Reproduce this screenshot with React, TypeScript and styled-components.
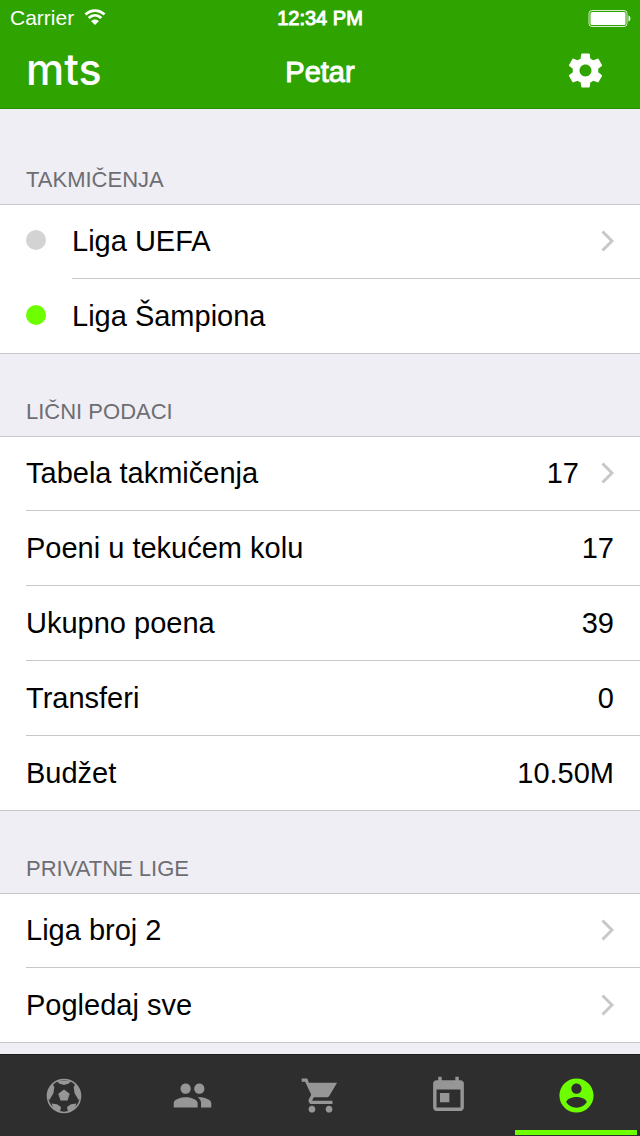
import React from "react";
import styled, { createGlobalStyle } from "styled-components";

const GlobalStyle = createGlobalStyle`
  * { box-sizing: border-box; }
  body {
    margin: 0;
    background: #efeef4;
    color: #000;
    font-family: "Liberation Sans", Arial, sans-serif;
  }
`;

const Screen = styled.div`
  display: flex;
  flex-direction: column;
  height: 100vh;
`;

const Header = styled.header`
  flex: none;
  height: 109px;
  background: #2fa400;
  color: #fff;
  border-bottom: 1px solid #279000;
`;

const ThreeColumns = styled.div`
  display: grid;
  grid-template-columns: 1fr auto 1fr;
  align-items: center;
`;

const StatusBar = styled(ThreeColumns)`
  height: 36px;
  padding: 0 9px;
  font-size: 20px;
`;

const Carrier = styled.div`
  display: flex;
  align-items: center;
  gap: 10px;
  padding-left: 1px;
  font-size: 21px;
`;

const Clock = styled.time`
  -webkit-text-stroke: 1px currentColor;
`;

const Battery = styled.svg`
  justify-self: end;
`;

const NavBar = styled(ThreeColumns)`
  height: 72px;
  padding: 0 26px;
`;

const Logo = styled.a`
  color: inherit;
  text-decoration: none;
  font: 500 43px/60px Inter, sans-serif;
  padding-bottom: 6px;
`;

const Title = styled.h1`
  margin: 0;
  font-size: 29px;
  font-weight: 400;
  -webkit-text-stroke: 1px currentColor;
`;

const IconButton = styled.button`
  justify-self: end;
  display: flex;
  padding: 0 8px 4px 0;
  border: 0;
  background: none;
  color: inherit;
`;

const Content = styled.main`
  flex: 1;
  min-height: 0;
  overflow: hidden;
  padding-top: 13px;
`;

const SectionTitle = styled.h2`
  margin: 0;
  padding: 44px 26px 10px;
  color: #6d6d72;
  font-size: 22px;
  font-weight: 400;
  line-height: 28px;
`;

const List = styled.ul`
  margin: 0;
  padding: 0;
  list-style: none;
  background: #fff;
  box-shadow: inset 0 1px #c8c7cc, inset 0 -1px #c8c7cc;
`;

const Item = styled.li`
  display: flex;
  align-items: center;
  height: 75px;
  padding-left: 26px;
`;

const Dot = styled.span<{ $on?: boolean }>`
  width: 20px;
  height: 20px;
  margin-right: 26px;
  margin-bottom: 4px;
  border-radius: 50%;
  background: ${(p) => (p.$on ? "#6dff00" : "#d3d3d3")};
`;

const Line = styled.a`
  flex: 1;
  align-self: stretch;
  display: flex;
  align-items: center;
  padding-right: 26px;
  color: inherit;
  text-decoration: none;
  font-size: 29px;
  border-bottom: 1px solid #c8c7cc;
`;

const Value = styled.span`
  margin-left: auto;
`;

const Chevron = styled.svg`
  flex: none;
  margin-left: auto;

  ${Value} + & {
    margin-left: 22px;
  }
`;

const TabBar = styled.nav`
  flex: none;
  display: grid;
  grid-template-columns: repeat(5, 1fr);
  height: 82px;
  background: #2e2e2e;
  border-top: 1px solid #1c1f1e;
`;

const Tab = styled.button<{ $active?: boolean }>`
  display: flex;
  align-items: center;
  justify-content: center;
  margin: 0 3px 1px;
  padding: 6px 0 0;
  border: 0;
  border-bottom: 5px solid ${(p) => (p.$active ? "#6dff00" : "transparent")};
  background: none;
  color: ${(p) => (p.$active ? "#6dff00" : "#969696")};
`;

const GEAR =
  "M19.43 12.98c.04-.32.07-.64.07-.98s-.03-.66-.07-.98l2.11-1.65c.19-.15.24-.42.12-.64l-2-3.46c-.12-.22-.39-.3-.61-.22l-2.49 1c-.52-.4-1.08-.73-1.69-.98l-.38-2.65C14.46 2.18 14.25 2 14 2h-4c-.25 0-.46.18-.49.42l-.38 2.65c-.61.25-1.17.59-1.69.98l-2.49-1c-.23-.09-.49 0-.61.22l-2 3.46c-.13.22-.07.49.12.64l2.11 1.65c-.04.32-.07.65-.07.98s.03.66.07.98l-2.11 1.65c-.19.15-.24.42-.12.64l2 3.46c.12.22.39.3.61.22l2.49-1c.52.4 1.08.73 1.69.98l.38 2.65c.03.24.24.42.49.42h4c.25 0 .46-.18.49-.42l.38-2.65c.61-.25 1.17-.59 1.69-.98l2.49 1c.23.09.49 0 .61-.22l2-3.46c.12-.22.07-.49-.12-.64l-2.11-1.65zM12 15.5c-1.93 0-3.5-1.57-3.5-3.5s1.57-3.5 3.5-3.5 3.5 1.57 3.5 3.5-1.57 3.5-3.5 3.5z";
const PEOPLE =
  "M16 11c1.66 0 2.99-1.34 2.99-3S17.66 5 16 5s-3 1.34-3 3 1.34 3 3 3zm-8 0c1.66 0 2.99-1.34 2.99-3S9.66 5 8 5 5 6.34 5 8s1.34 3 3 3zm0 2c-2.33 0-7 1.17-7 3.5V19h14v-2.5c0-2.33-4.67-3.5-7-3.5zm8 0c-.29 0-.62.02-.97.05 1.16.84 1.97 1.97 1.97 3.45V19h6v-2.5c0-2.33-4.67-3.5-7-3.5z";
const CART =
  "M7 18c-1.1 0-1.99.9-1.99 2S5.9 22 7 22s2-.9 2-2-.9-2-2-2zM1 2v2h2l3.6 7.59-1.35 2.45c-.16.28-.25.61-.25.96 0 1.1.9 2 2 2h12v-2H7.42c-.14 0-.25-.11-.25-.25l.03-.12.9-1.63h7.45c.75 0 1.41-.41 1.75-1.03L21.7 4.5H5.21L4.270 2H1zm16 16c-1.1 0-1.99.9-1.99 2s.89 2 1.99 2 2-.9 2-2-.9-2-2-2z";
const CALENDAR =
  "M19 3h-1V1h-2v2H8V1H6v2H5c-1.11 0-1.99.9-1.99 2L3 19c0 1.1.89 2 2 2h14c1.1 0 2-.9 2-2V5c0-1.1-.9-2-2-2zm0 16H5V8.500h14V19zM7 10.500h5.500v5.500H7z";
const ACCOUNT =
  "M12 2C6.48 2 2 6.48 2 12s4.48 10 10 10 10-4.48 10-10S17.52 2 12 2zm0 3c1.66 0 3 1.34 3 3s-1.34 3-3 3-3-1.34-3-3 1.34-3 3-3zm0 14.2c-2.5 0-4.71-1.28-6-3.22.03-1.99 4-3.08 6-3.08 1.99 0 5.97 1.09 6 3.08-1.29 1.94-3.5 3.22-6 3.22z";

const Icon = ({ d }: { d: string }) => (
  <svg width="41" height="41" viewBox="0 0 24 24" fill="currentColor" aria-hidden="true">
    <path d={d} />
  </svg>
);

const BallIcon = () => (
  <svg width="42" height="42" viewBox="0 0 42 42" fill="currentColor" aria-hidden="true">
    <circle cx="21" cy="21" r="16.5" fill="none" stroke="currentColor" strokeWidth="1.6" />
    <path d="M21 14.500l5.700 4.200L24.500 25.500h-7L15.300 18.700z" />
    <path d="M14 5.500h14l-2 3-5 1.500-5-1.500z" />
    <path d="M9.500 9l1.800 3-.8 6L6.500 25 4.500 23 4.800 15z" />
    <path d="M32.500 9l-1.800 3 .8 6 4 7 2-2-.3-8z" />
    <path d="M8.500 28.500l5.500.8 4 2.700-1 5-6.500-3z" />
    <path d="M33.500 28.500l-5.500.8-4 2.700 1 5 6.500-3z" />
  </svg>
);

const tabs = [
  { label: "Utakmice", icon: <BallIcon /> },
  { label: "Tim", icon: <Icon d={PEOPLE} /> },
  { label: "Transferi", icon: <Icon d={CART} /> },
  { label: "Kalendar", icon: <Icon d={CALENDAR} /> },
  { label: "Profil", icon: <Icon d={ACCOUNT} />, active: true },
];

type RowData = {
  label: string;
  value?: string;
  link?: boolean;
  dot?: "on" | "off";
};

const sections: { title: string; rows: RowData[] }[] = [
  {
    title: "TAKMIČENJA",
    rows: [
      { label: "Liga UEFA", dot: "off", link: true },
      { label: "Liga Šampiona", dot: "on" },
    ],
  },
  {
    title: "LIČNI PODACI",
    rows: [
      { label: "Tabela takmičenja", value: "17", link: true },
      { label: "Poeni u tekućem kolu", value: "17" },
      { label: "Ukupno poena", value: "39" },
      { label: "Transferi", value: "0" },
      { label: "Budžet", value: "10.50M" },
    ],
  },
  {
    title: "PRIVATNE LIGE",
    rows: [
      { label: "Liga broj 2", link: true },
      { label: "Pogledaj sve", link: true },
    ],
  },
];

const Row = ({ label, value, link, dot }: RowData) => (
  <Item>
    {dot && <Dot $on={dot === "on"} />}
    <Line as={link ? "a" : "div"} {...(link ? { href: "#" } : {})}>
      {label}
      {value && <Value>{value}</Value>}
      {link && (
        <Chevron width="13" height="22" viewBox="0 0 13 22" fill="none" stroke="#c7c7cc" strokeWidth="3" aria-hidden="true">
          <path d="M1.500 1.500L11 11l-9.500 9.500" />
        </Chevron>
      )}
    </Line>
  </Item>
);

export default function App() {
  return (
    <Screen>
      <GlobalStyle />
      <Header>
        <StatusBar>
          <Carrier>
            Carrier
            <svg width="22" height="18" viewBox="0 0 22 18" fill="none" stroke="#fff" strokeWidth="2.800" aria-hidden="true">
              <path d="M1.500 5.500C7 .3 15 .3 20.500 5.500M4.700 9C8.500 5.400 13.500 5.400 17.300 9" />
              <path d="M11 16L7 12C9.300 9.900 12.700 9.900 15 12z" fill="#fff" stroke="none" />
            </svg>
          </Carrier>
          <Clock>12:34 PM</Clock>
          <Battery width="43" height="17" viewBox="0 0 43 17" aria-hidden="true">
            <rect x="1" y="0.500" width="38" height="16" rx="3" fill="none" stroke="#fff" strokeOpacity="0.800" />
            <rect x="2.500" y="2" width="35" height="13" rx="1.500" fill="#fff" />
            <path d="M40.500 5.500c2.500.5 2.500 5.500 0 6z" fill="#fff" />
          </Battery>
        </StatusBar>
        <NavBar>
          <Logo href="#">mts</Logo>
          <Title>Petar</Title>
          <IconButton aria-label="Podešavanja">
            <Icon d={GEAR} />
          </IconButton>
        </NavBar>
      </Header>
      <Content>
        {sections.map((s) => (
          <section key={s.title}>
            <SectionTitle>{s.title}</SectionTitle>
            <List>
              {s.rows.map((r) => (
                <Row key={r.label} {...r} />
              ))}
            </List>
          </section>
        ))}
      </Content>
      <TabBar>
        {tabs.map((t) => (
          <Tab key={t.label} $active={t.active} aria-label={t.label}>
            {t.icon}
          </Tab>
        ))}
      </TabBar>
    </Screen>
  );
}
